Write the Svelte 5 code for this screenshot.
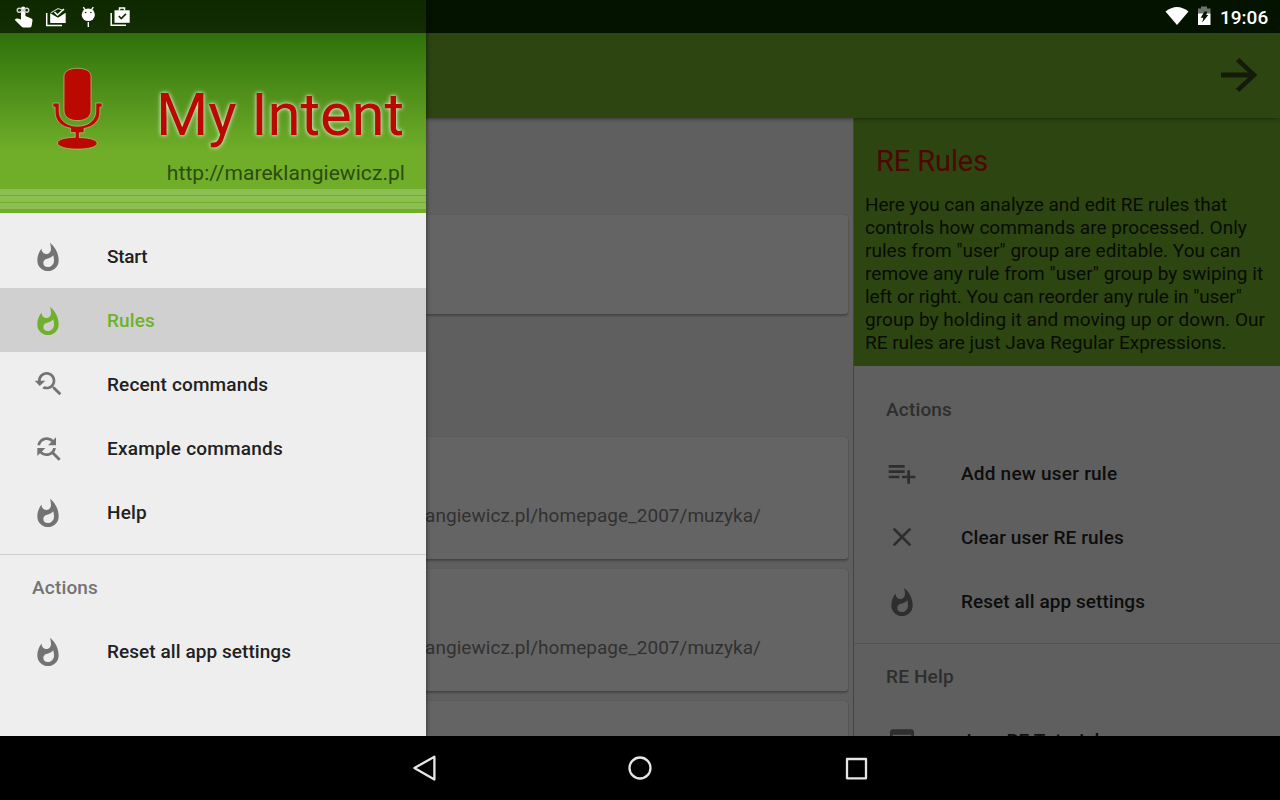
<script>
  const icons = {
    flame: 'M13.5 1.97s.74 2.65.74 4.8c0 2.06-1.35 3.73-3.41 3.73-2.07 0-3.63-1.67-3.63-3.73l.03-.36C5.21 8.81 4 11.92 4 15.3c0 4.42 3.58 8 8 8s8-3.58 8-8C20 9.91 17.41 5.1 13.5 1.97zM11.71 20.3c-1.78 0-3.22-1.4-3.22-3.14 0-1.62 1.05-2.76 2.81-3.12 1.77-.36 3.6-1.21 4.62-2.58.39 1.29.59 2.65.59 4.04 0 2.65-2.15 4.8-4.8 4.8z',
    recent: 'M17.01 14h-.8l-.27-.27c.98-1.14 1.57-2.61 1.57-4.23 0-3.59-2.91-6.5-6.5-6.5s-6.5 3-6.5 6.5H2l3.84 4 4.16-4H6.51C6.51 7 8.53 5 11.01 5s4.5 2.01 4.5 4.5c0 2.48-2.02 4.5-4.5 4.5-.65 0-1.26-.14-1.82-.38L7.71 15.1c.97.57 2.09.9 3.3.9 1.61 0 3.08-.59 4.22-1.57l.27.27v.79l5.01 4.99L22 19l-4.99-5z',
    replace: 'M11 6c1.38 0 2.63.56 3.54 1.46L12 10h6V4l-2.05 2.05C14.68 4.78 12.93 4 11 4c-3.53 0-6.43 2.61-6.92 6H6.1c.46-2.28 2.48-4 4.9-4zm5.64 9.14c.66-.9 1.12-1.97 1.28-3.14H15.9c-.46 2.28-2.48 4-4.9 4-1.38 0-2.63-.56-3.54-1.46L10 12H4v6l2.05-2.05C7.32 17.22 9.07 18 11 18c1.55 0 2.98-.51 4.14-1.36L20 21.49 21.49 20l-4.85-4.86z',
    add: 'M14 10H2v2h12v-2zm0-4H2v2h12V6zm4 8v-4h-2v4h-4v2h4v4h2v-4h4v-2h-4zM2 16h8v-2H2v2z',
    clear: 'M19 6.41 17.59 5 12 10.59 6.41 5 5 6.41 10.59 12 5 17.59 6.41 19 12 13.41 17.59 19 19 17.59 13.41 12z',
    browser: 'M19 4H5c-1.11 0-2 .9-2 2v12c0 1.1.89 2 2 2h4v-2H5V8h14v10h-4v2h4c1.1 0 2-.9 2-2V6c0-1.1-.89-2-2-2zm-7 6l-4 4h3v6h2v-6h3l-4-4z'
  };
  const pages = [
    { icon: 'flame', label: 'Start', track: -0.25 },
    { icon: 'flame', label: 'Rules', track: 0.1, selected: true },
    { icon: 'recent', label: 'Recent commands', track: 0.15 },
    { icon: 'replace', label: 'Example commands', track: 0.21 },
    { icon: 'flame', label: 'Help', track: 0.15 }
  ];
  const ruleActions = [
    { icon: 'add', label: 'Add new user rule', track: 0.22 },
    { icon: 'clear', label: 'Clear user RE rules', track: 0.12 },
    { icon: 'flame', label: 'Reset all app settings', track: 0.06 }
  ];
  const intro = [
    ['Here you can analyze and edit RE rules that', -0.02],
    ['controls how commands are processed. Only', 0.03],
    ['rules from "user" group are editable. You can', 0.02],
    ['remove any rule from "user" group by swiping it', 0.05],
    ['left or right. You can reorder any rule in "user"', -0.06],
    ['group by holding it and moving up or down. Our', 0.05],
    ['RE rules are just Java Regular Expressions.', -0.01]
  ];
  const url = 'http://mareklangiewicz.pl/homepage_2007/muzyka/';
</script>

{#snippet item(entry)}
  <div class="item" class:selected={entry.selected}>
    <svg viewBox="0 0 24 24" width="32" height="32"><path d={icons[entry.icon]} /></svg>
    <span style:letter-spacing="{entry.track}px">{entry.label}</span>
  </div>
{/snippet}

<div class="screen">
  <div class="app">
    <div class="under-status"></div>
    <header class="toolbar">
      <svg width="38" height="36" viewBox="0 0 38 36"><path d="M1 15.6h27.2L15.8 4.3 19.3.9 37.4 18 19.3 35.1l-3.5-3.4L28.2 20.4H1z" /></svg>
    </header>
    <div class="content">
      <main class="list">
        <section class="card first"></section>
        <section class="card second"><span>{url}</span></section>
        <section class="card"><span>{url}</span></section>
        <section class="card"></section>
      </main>
      <aside class="side">
        <div class="intro">
          <h2>RE Rules</h2>
          <p>{#each intro as [line, track]}<span style:letter-spacing="{track}px">{line} </span>{/each}</p>
        </div>
        <div class="menu side-menu">
          <div class="sub">Actions</div>
          {#each ruleActions as entry}{@render item(entry)}{/each}
          <div class="sub ruled">RE Help</div>
          {@render item({ icon: 'browser', label: 'Java RE Tutorial', track: 0.1 })}
        </div>
      </aside>
    </div>
  </div>

  <nav class="drawer">
    <div class="banner">
      <div class="brand">
        <svg class="mic" width="54" height="86" viewBox="50 65 54 86">
          <g fill="#b90900" stroke="#b9c98a" stroke-width=".7">
            <path d="M64 76.500C64 71 69.500 68.300 77.500 68.300S91 71 91 76.500V110C91 117 85.500 120.600 77.500 120.600S64 117 64 110z" />
            <path d="M52.900 103h6.300v8c0 9.500 7.800 15.200 18.300 15.200S95.800 120.500 95.800 111v-8h6.300v4.200h-2.200v5c0 8.800-6.400 14.600-15.900 16.300v4.300h-4.700v4.800c10 .1 17.800 2.100 17.800 5.700 0 3.700-8.200 5.800-19.600 5.800S57.500 146.700 57.500 143c0-3.600 7.800-5.600 17.800-5.700v-4.800h-4.700v-4.300C61.500 126.800 55.100 121 55.100 112.200v-5h-2.200z" />
          </g>
        </svg>
        <h1>My Intent</h1>
      </div>
      <div class="site">http://mareklangiewicz.pl</div>
      <div class="stripes"><i></i><i></i><i></i></div>
    </div>
    <div class="menu">
      {#each pages as entry}{@render item(entry)}{/each}
      <div class="sub ruled">Actions</div>
      {@render item({ icon: 'flame', label: 'Reset all app settings', track: 0.06 })}
    </div>
  </nav>

  <div class="status">
    <svg width="140" height="33" viewBox="0 0 140 33" fill="#fff">
      <g>
        <path d="M21 12.500V8.600a2.200 2.200 0 0 1 4.400 0V16l6 2.600q1.300.7 1.100 2L31.600 26q-.3 1.400-1.700 1.400h-6.500q-1 0-1.700-.7L14.700 19.800l1.200-1q.8-.6 1.800-.3l3.300 1z" />
        <path d="M22.500 10c-2-2.300-5.200-2.300-5.200.3s3.200 2.600 5.200.3zM23.500 10c2-2.300 5.200-2.300 5.200.3s-3.200 2.600-5.200.3z" fill="none" stroke="#cdd3ca" stroke-width="1.500" />
      </g>
      <g>
        <path d="M46.700 13v12.500H62" fill="none" stroke="#fff" stroke-width="1.500" />
        <path d="M50.200 13.200 58 17.800l7.700-5V23H50.200z" />
        <path d="m51 12.700 7-4.200 5.500 2" fill="none" stroke="#cdd3ca" stroke-width="1.100" />
        <path d="m54.500 12 3 3 6.500-6" fill="none" stroke="#fff" stroke-width="1.500" />
      </g>
      <g>
        <ellipse cx="88.300" cy="14.700" rx="6.600" ry="6.300" />
        <path d="m83.300 7.200 2 3m8-3-2 3M88.300 22v5" fill="none" stroke="#fff" stroke-width="1.400" />
        <circle cx="85.700" cy="12.500" r=".8" fill="#102a02" /><circle cx="90.900" cy="12.500" r=".8" fill="#102a02" />
      </g>
      <g>
        <path d="M111.200 13v12.200H126" fill="none" stroke="#fff" stroke-width="1.500" />
        <path d="M114.500 10.300h15.200v12.500h-15.200z" />
        <path d="M119.500 10.500V8h5v2.500" fill="none" stroke="#fff" stroke-width="1.500" />
        <path d="m118.800 16 2.500 2.500 4.600-4.600" fill="none" stroke="#102a02" stroke-width="1.600" />
      </g>
    </svg>
    <svg class="right" width="50" height="33" viewBox="1164 0 50 33">
      <path d="M1165.500 11.500Q1177 2.500 1188.500 11.500L1177 25z" fill="#fff" />
      <path d="M1198 8.500h3V6.500h6v2h3.500V14H1198z" fill="#6c756b" />
      <path d="M1198 13.500h12.500V25H1198z" fill="#fff" />
      <path d="M1204.500 11.500h2.800l-1 3.500h2L1202.200 22.500l1.100-4.800h-2.600z" fill="#061500" />
    </svg>
    <time>19:06</time>
  </div>

  <div class="navbar">
    <svg width="460" height="64" viewBox="410 0 460 64" fill="none" stroke="#e6e6e6" stroke-width="2.300" stroke-linejoin="round">
      <path d="M414.400 32 434.400 20.800v22.800z" />
      <circle cx="640" cy="32" r="10.500" />
      <path d="M847 23h19v19.300h-19z" />
    </svg>
  </div>
</div>

<style>
  :global(body) { margin: 0; background: #000; }
  .screen { position: relative; width: 1280px; height: 800px; overflow: hidden; background: #000; font-family: Roboto, sans-serif; font-size: 19px; }
  svg { display: block; flex: none; }
  h1, h2, p { margin: 0; font-weight: 400; }
  .app { width: 1280px; height: 736px; display: flex; flex-direction: column; overflow: hidden; background: #5f5f5f; isolation: isolate; }
  .under-status { height: 33px; flex: none; background: #041200; z-index: 2; }
  .toolbar { height: 85px; flex: none; box-sizing: border-box; background: #2d4511; display: flex; justify-content: flex-end; align-items: center; padding: 0 22px 1px 0; z-index: 1; box-shadow: 0 1px 4px rgba(0, 0, 0, .4); }
  .toolbar svg { fill: #141c09; }
  .content { flex: 1; min-height: 0; display: flex; }
  .list { width: 853px; box-sizing: border-box; padding: 97px 5px 0; display: flex; flex-direction: column; gap: 10px; overflow: hidden; }
  .card { height: 122px; flex: none; box-sizing: border-box; border-radius: 3px; background: #646464; box-shadow: 0 2px 2px rgba(0, 0, 0, .26), 0 0 1px rgba(0, 0, 0, .25); display: flex; justify-content: flex-end; align-items: flex-start; padding: 68px 87px 0 0; color: #313131; line-height: 22px; letter-spacing: .03px; }
  .first { height: 99px; }
  .second { margin-top: 113px; }
  .side { flex: 1; border-left: 1px solid #444; overflow: hidden; }
  .intro { height: 248px; box-sizing: border-box; padding: 26px 0 0 11px; background: #2d4511; color: #080c03; }
  .intro h2 { font-size: 29px; line-height: 34px; letter-spacing: -.1px; padding-left: 11px; color: #4f0703; }
  .intro p { line-height: 23px; padding-top: 15px; white-space: nowrap; }
  .intro p span { display: block; }
  .menu { padding-top: 11px; font-weight: 500; color: #212121; }
  .item { height: 64px; box-sizing: border-box; padding: 0 32px; display: flex; align-items: center; gap: 43px; white-space: nowrap; }
  .item span { padding-top: 1px; }
  .item svg { fill: #737373; }
  .selected { background: #d0d0d0; color: #70b02a; }
  .selected svg { fill: #70b02a; }
  .sub { height: 64px; box-sizing: border-box; padding-left: 32px; line-height: 65px; letter-spacing: .18px; color: #737373; }
  .ruled { margin-top: 10px; height: 65px; border-top: 1px solid #cecece; }
  .side-menu { color: #0d0d0d; }
  .side-menu .item svg { fill: #2e2e2e; }
  .side-menu .sub { color: #2e2e2e; }
  .side-menu .ruled { border-color: #525252; }
  .drawer { position: absolute; left: 0; top: 0; width: 426px; height: 736px; background: #eee; box-shadow: 1px 0 4px rgba(0, 0, 0, .4); overflow: hidden; }
  .banner { height: 213px; box-sizing: border-box; padding-top: 65px; background: linear-gradient(#246300 0, #2e710b 33px, #70ae29 152px); display: flex; flex-direction: column; }
  .brand { display: flex; padding: 0 22px 0 50px; justify-content: space-between; height: 93px; }
  h1 { font-size: 60px; line-height: 70px; letter-spacing: -.16px; padding-top: 15px; color: #b90900; text-shadow: 0 0 5px rgba(255, 255, 255, .8), 0 0 3px rgba(255, 255, 255, .5); white-space: nowrap; }
  .site { font-size: 21px; letter-spacing: .06px; line-height: 30px; height: 31px; text-align: right; padding-right: 21px; color: #2d4b10; }
  .stripes { display: flex; flex-direction: column; gap: 1px; }
  .stripes i { height: 6px; background: #8bbf51; }
  .status { position: absolute; left: 0; top: 0; width: 1280px; height: 33px; display: flex; align-items: center; color: #fff; isolation: isolate; }
  .status::before { content: ''; position: absolute; width: 426px; height: 33px; background: rgba(0, 0, 0, .6); z-index: -1; }
  .right { margin-left: auto; }
  time { width: 66px; box-sizing: border-box; padding: 2px 0 0 6px; font-weight: 500; line-height: 33px; }
  .navbar { height: 64px; display: flex; justify-content: center; }
</style>
